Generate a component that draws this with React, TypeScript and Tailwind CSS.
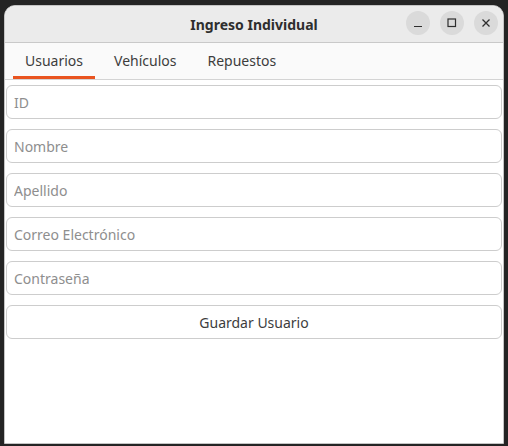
import React from 'react';

const fields = ['ID', 'Nombre', 'Apellido', 'Correo Electrónico', 'Contraseña'];
const tabs = ['Usuarios', 'Vehículos', 'Repuestos'];

const WinButton: React.FC<{ children: React.ReactNode }> = ({ children }) => (
    <div className="w-[24px] h-[24px] rounded-full bg-[#dadada] flex items-center justify-center">
        {children}
    </div>
);

const App: React.FC = () => {
    return (
        <div
            className="w-[508px] h-[446px] bg-[#242424] pt-[5px] pl-[4px]"
            style={{ fontFamily: '"Noto Sans", "Open Sans", sans-serif' }}
        >
            <div className="w-[500px] h-[439px] rounded-t-[11px] border border-[#c4c4c4] bg-white flex flex-col overflow-hidden">
                {/* title bar */}
                <div className="relative h-[37px] shrink-0 bg-[#ebebeb] border-b border-[#c9c9c9] flex items-center justify-center">
                    <span className="text-[14px] font-bold text-[#2e2e2e]">Ingreso Individual</span>
                    <div className="absolute right-[5px] top-[5px] flex gap-[10px]">
                        <WinButton>
                            <svg width="10" height="10" viewBox="0 0 10 10">
                                <path d="M1 8.5h8" stroke="#2e2e2e" strokeWidth="1.2" />
                            </svg>
                        </WinButton>
                        <WinButton>
                            <svg width="10" height="10" viewBox="0 0 10 10">
                                <rect x="1" y="1" width="7.5" height="7.5" fill="none" stroke="#2e2e2e" strokeWidth="1.2" />
                            </svg>
                        </WinButton>
                        <WinButton>
                            <svg width="10" height="10" viewBox="0 0 10 10">
                                <path d="M1.5 1.5l7 7M8.5 1.5l-7 7" stroke="#2e2e2e" strokeWidth="1.3" />
                            </svg>
                        </WinButton>
                    </div>
                </div>

                {/* tabs */}
                <div className="h-[37px] shrink-0 bg-[#fafafa] border-b border-[#d4d4d4] flex pl-[8px]">
                    {tabs.map((t, i) => (
                        <div
                            key={t}
                            className={`px-[12px] mr-[7px] flex items-center text-[14px] text-[#3d3d3d] border-b-[3px] ${
                                i === 0 ? 'border-[#e95420]' : 'border-transparent'
                            }`}
                        >
                            <span className="pt-[2px]">{t}</span>
                        </div>
                    ))}
                </div>

                {/* form */}
                <div className="flex flex-col gap-[10px] px-[1px] pt-[5px]">
                    {fields.map((f) => (
                        <input
                            key={f}
                            placeholder={f}
                            className="h-[34px] w-full rounded-[6px] border border-[#cdcdcd] bg-white px-[7px] text-[14px] text-[#333] placeholder:text-[#8e8e8e] outline-none"
                        />
                    ))}
                    <button className="h-[34px] w-full rounded-[6px] border border-[#cdcdcd] bg-white text-[14px] text-[#3d3d3d]">
                        Guardar Usuario
                    </button>
                </div>
            </div>
        </div>
    );
};

export default App;
